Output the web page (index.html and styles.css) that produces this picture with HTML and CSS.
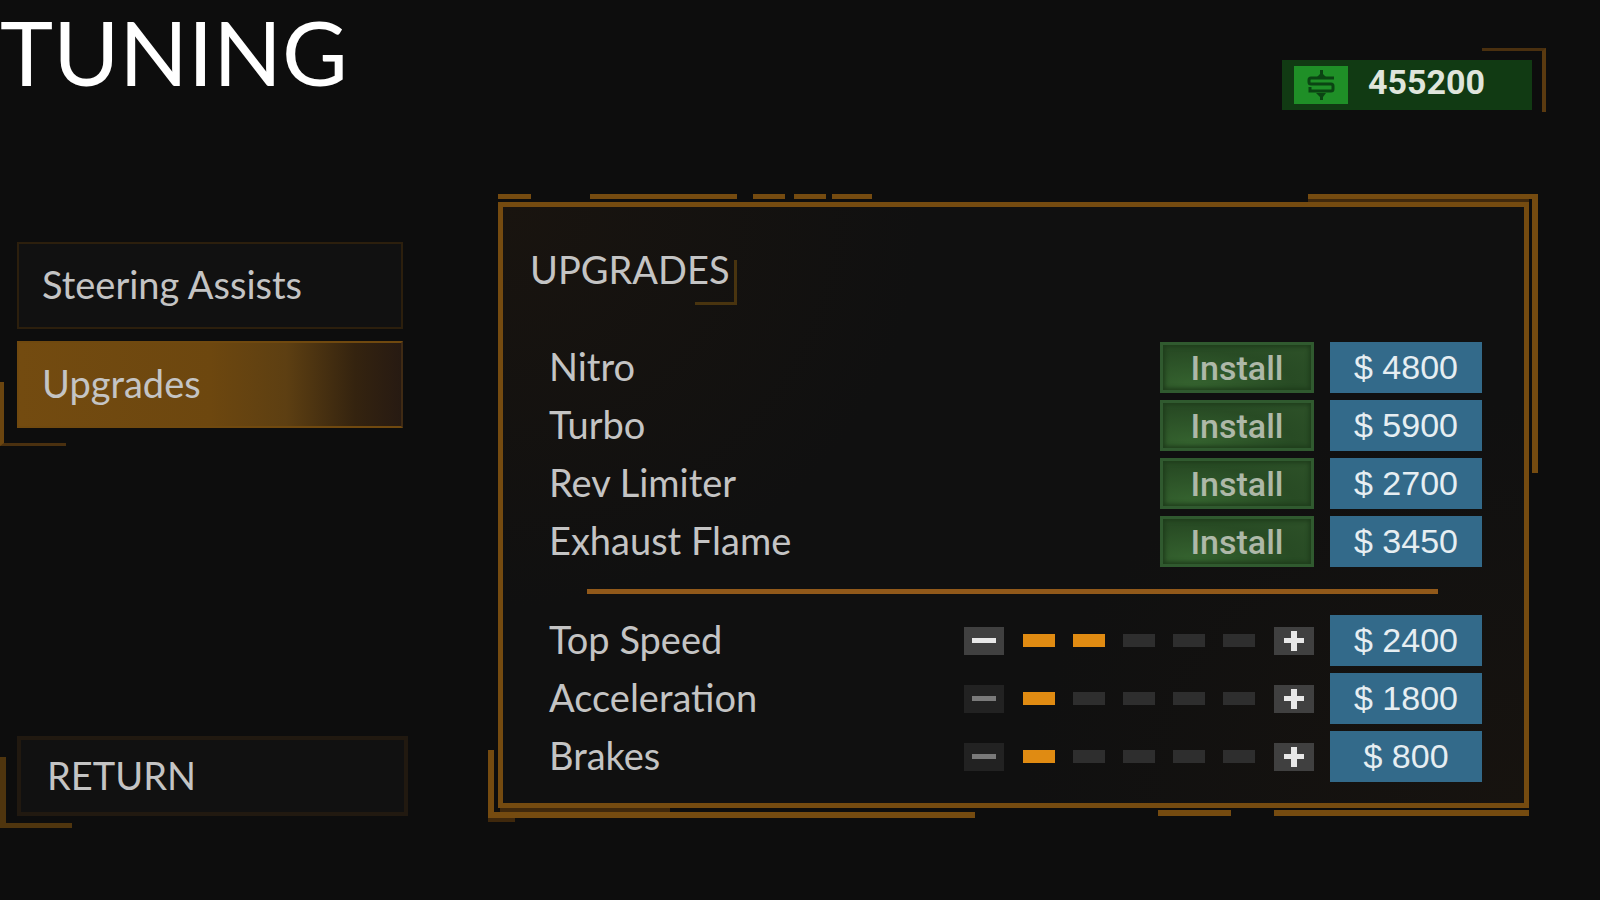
FILE: index.html
```html
<!DOCTYPE html>
<html lang="en">
  <head>
    <meta charset="UTF-8" />
    <meta name="viewport" content="width=device-width, initial-scale=1.0" />
    <title>Tuning</title>
    <link rel="stylesheet" href="styles.css">
  </head>
  <body>
    <header class="top-bar">
      <h1>TUNING</h1>
      <div class="wallet">
        <svg class="cash-icon" viewBox="0 0 54 38" aria-hidden="true">
          <rect width="54" height="38" fill="#1f8f27" />
          <path d="M40 12H17q-2 0-2 2v2q0 2 2 2h20q2 0 2 2v3q0 2-2 2H16v-4" fill="none" stroke="#0b4413" stroke-width="3" />
          <path d="M23 11l3-3V4h3v4l3 3zM22 27h10l-3 4v3h-3v-3z" fill="#0b4413" />
        </svg>
        <span class="balance">455200</span>
      </div>
    </header>

    <main class="layout">
      <nav class="sidebar">
        <div class="menu">
          <button class="menu-item">Steering Assists</button>
          <button class="menu-item active">Upgrades</button>
        </div>
        <button class="menu-item return">RETURN</button>
      </nav>

      <section class="panel">
        <h2>UPGRADES</h2>

        <!-- One-off parts -->
        <div class="rows">
          <div class="row">
            <span class="name">Nitro</span>
            <button class="install">Install</button>
            <span class="price">$ 4800</span>
          </div>
          <div class="row">
            <span class="name">Turbo</span>
            <button class="install">Install</button>
            <span class="price">$ 5900</span>
          </div>
          <div class="row">
            <span class="name">Rev Limiter</span>
            <button class="install">Install</button>
            <span class="price">$ 2700</span>
          </div>
          <div class="row">
            <span class="name">Exhaust Flame</span>
            <button class="install">Install</button>
            <span class="price">$ 3450</span>
          </div>
        </div>

        <hr class="divider" />

        <!-- Levelled parts -->
        <div class="rows">
          <div class="row">
            <span class="name">Top Speed</span>
            <div class="stepper">
              <button class="step minus" aria-label="Lower top speed"></button>
              <div class="levels"><i class="on"></i><i class="on"></i><i></i><i></i><i></i></div>
              <button class="step plus" aria-label="Raise top speed"></button>
            </div>
            <span class="price">$ 2400</span>
          </div>
          <div class="row">
            <span class="name">Acceleration</span>
            <div class="stepper">
              <button class="step minus" aria-label="Lower acceleration" disabled></button>
              <div class="levels"><i class="on"></i><i></i><i></i><i></i><i></i></div>
              <button class="step plus" aria-label="Raise acceleration"></button>
            </div>
            <span class="price">$ 1800</span>
          </div>
          <div class="row">
            <span class="name">Brakes</span>
            <div class="stepper">
              <button class="step minus" aria-label="Lower brakes" disabled></button>
              <div class="levels"><i class="on"></i><i></i><i></i><i></i><i></i></div>
              <button class="step plus" aria-label="Raise brakes"></button>
            </div>
            <span class="price">$ 800</span>
          </div>
        </div>
      </section>
    </main>
  </body>
</html>
```

FILE: styles.css
```css
:root {
  --gold: linear-gradient(#754b10, #754b10);
  --dim: linear-gradient(#3f280c, #3f280c);
}

*,
*::before,
*::after {
  box-sizing: border-box;
}

body {
  margin: 0;
  min-height: 100vh;
  background-color: #0d0d0d;
  color: #c4c4c4;
  font-family: Lato, "Noto Sans", sans-serif;
}

button {
  margin: 0;
  padding: 0;
  border: 0;
  font-family: inherit;
  color: inherit;
  cursor: pointer;
}

/* Header */
.top-bar {
  display: flex;
  justify-content: space-between;
  align-items: flex-start;
  height: 202px;
  padding-right: 68px;
}

h1 {
  margin: 0;
  font-size: 90px;
  line-height: 102px;
  font-weight: 400;
  color: #fff;
}

.wallet {
  position: relative;
  display: flex;
  align-items: center;
  gap: 20px;
  width: 250px;
  height: 50px;
  margin-top: 60px;
  padding: 0 12px;
  background-color: #113a13;
}

.wallet::after {
  content: "";
  position: absolute;
  top: -12px;
  right: -14px;
  width: 64px;
  height: 64px;
  border-top: 3px solid #4a300f;
  border-right: 4px solid #5a3a10;
}

.cash-icon {
  width: 54px;
  height: 38px;
}

.balance {
  font-family: Roboto, sans-serif;
  font-size: 34px;
  line-height: 44px;
  font-weight: 700;
  color: #dfe5dc;
  margin-bottom: 6px;
}

/* Page columns */
.layout {
  display: grid;
  grid-template-columns: 386px 1fr;
  gap: 95px;
  padding: 0 71px 0 17px;
}

.sidebar {
  display: flex;
  flex-direction: column;
  justify-content: space-between;
  padding-top: 40px;
}

.menu {
  display: flex;
  flex-direction: column;
  gap: 12px;
}

.menu-item {
  position: relative;
  height: 87px;
  padding: 0 0 3px 23px;
  border: 2px solid #2c1f0d;
  background-color: #111;
  font-size: 38px;
  line-height: 48px;
  text-align: left;
}

.menu-item.active {
  border-color: #70490f;
  border-right-color: #3f2a14;
  background: linear-gradient(90deg, #734b10 0, #6d470f 50%, #5d3f12 70%, #34230f 88%, #271a12 100%);
}

.menu-item.return {
  height: 80px;
  width: 391px;
  padding-left: 26px;
  border-width: 4px;
  border-color: #211910;
}

.menu-item.active::after,
.menu-item.return::after {
  content: "";
  position: absolute;
  left: -19px;
  bottom: -20px;
  width: 66px;
  height: 64px;
  border-left: 4px solid #6b450f;
  border-bottom: 3px solid #4a300f;
}

.menu-item.return::after {
  left: -21px;
  bottom: -16px;
  width: 72px;
  height: 71px;
  border-left: 6px solid #4f350e;
  border-bottom: 5px solid #4f350e;
}

/* Upgrades panel */
.panel {
  position: relative;
  margin-bottom: 8px;
  padding: 38px 42px 21px 27px;
  border: 5px solid #754b10;
  background:
    radial-gradient(ellipse 420px 400px at 0 0, #19140f, transparent),
    radial-gradient(ellipse 500px 400px at 100% 100%, #17130f, transparent),
    #101010;
}

/* Broken outline that runs outside the frame */
.panel::before {
  content: "";
  position: absolute;
  inset: -13px -14px -19px -15px;
  pointer-events: none;
  background:
    var(--gold) left 10px top 0 / 33px 5px,
    var(--gold) left 102px top 0 / 147px 5px,
    var(--gold) left 265px top 0 / 32px 5px,
    var(--gold) left 306px top 0 / 32px 5px,
    var(--gold) left 344px top 0 / 40px 5px,
    var(--gold) right 0 top 0 / 230px 5px,
    var(--gold) right 0 top 0 / 6px 279px,
    var(--dim) right 9px top 5px / 221px 3px,
    var(--gold) left 0 bottom 4px / 6px 68px,
    var(--gold) left 0 bottom 4px / 487px 6px,
    var(--dim) left 12px bottom 10px / 170px 4px,
    var(--dim) left 0 bottom 0 / 27px 4px,
    var(--gold) right 307px bottom 6px / 73px 6px,
    var(--gold) right 9px bottom 6px / 255px 6px;
  background-repeat: no-repeat;
}

h2 {
  position: relative;
  width: 207px;
  margin: 0 0 37px;
  padding-bottom: 12px;
  font-size: 38px;
  line-height: 48px;
  font-weight: 400;
}

h2::after {
  content: "";
  position: absolute;
  right: 0;
  bottom: 0;
  width: 42px;
  height: 45px;
  border-right: 3px solid #49340f;
  border-bottom: 3px solid #49340f;
}

.rows {
  display: flex;
  flex-direction: column;
  gap: 7px;
  margin-left: 19px;
}

.row {
  display: flex;
  align-items: center;
  gap: 16px;
  height: 51px;
}

.name {
  flex: 1;
  padding-bottom: 3px;
  font-size: 38px;
  line-height: 48px;
}

.install {
  width: 154px;
  height: 51px;
  border: 3px solid #305a2f;
  background: radial-gradient(ellipse at 20% 90%, #35632f, #284b24 60%, #2e5229);
  box-shadow: inset 0 0 4px 2px #1e3c1b;
  font-family: Roboto, sans-serif;
  font-size: 34px;
  line-height: 44px;
  font-weight: 500;
  color: #aeb8a8;
}

.price {
  width: 152px;
  background-color: #336a8a;
  font-family: "Liberation Sans", Arial, sans-serif;
  font-size: 34px;
  line-height: 51px;
  text-align: center;
  color: #e6eef2;
}

.divider {
  height: 5px;
  margin: 22px 44px 21px 57px;
  border: 0;
  background-color: #91591a;
}

/* Level stepper */
.stepper {
  display: flex;
  align-items: center;
  gap: 19px;
}

.levels {
  display: flex;
  gap: 18px;
}

.levels i {
  width: 32px;
  height: 13px;
  background-color: #2e2e2e;
}

.levels .on {
  background-color: #e08b12;
}

.step {
  width: 40px;
  height: 28px;
  background: linear-gradient(#e8e8e8, #e8e8e8) center / 24px 5px no-repeat #404040;
}

.step.plus {
  background:
    linear-gradient(#e8e8e8, #e8e8e8) center / 20px 5px no-repeat,
    linear-gradient(#e8e8e8, #e8e8e8) center / 6px 20px no-repeat,
    #404040;
}

.step:disabled {
  background: linear-gradient(#7a7a7a, #7a7a7a) center / 24px 5px no-repeat #222;
}
```
